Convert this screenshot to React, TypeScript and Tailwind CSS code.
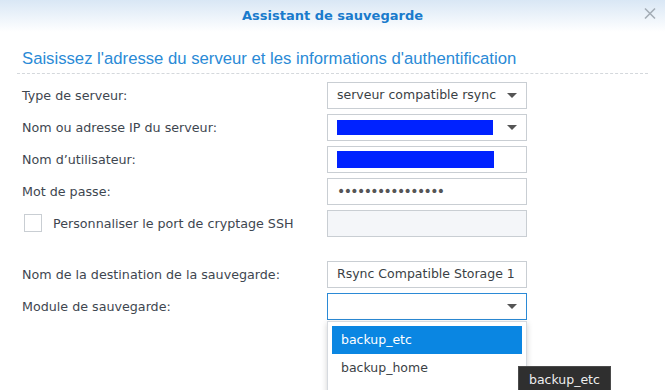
import React from 'react';

const font = "font-['DejaVu_Sans',Verdana,sans-serif]";

function Arrow() {
    return (
        <svg width="10" height="5" viewBox="0 0 10 5" className="shrink-0">
            <path d="M0 0 L10 0 L5 5 Z" fill="#555" />
        </svg>
    );
}

function Row({ label, children }: { label: React.ReactNode; children: React.ReactNode }) {
    return (
        <div className="flex items-center h-[27px]">
            <div className="w-[305px] shrink-0 text-[#3e4650] text-[12.7px]">{label}</div>
            {children}
        </div>
    );
}

function Field({ children, select, disabled, active }: { children?: React.ReactNode; select?: boolean; disabled?: boolean; active?: boolean }) {
    return (
        <div
            className={`w-[200px] h-[27px] flex items-center pl-[9px] pr-[9px] border text-[12.5px] text-[#3a3f45] ${active ? 'border-[#2b8ad6]' : 'border-[#c9ced3]'
                } ${disabled ? 'bg-[#f4f6f9]' : 'bg-white'}`}
        >
            <div className="flex-1 min-w-0 flex items-center whitespace-nowrap overflow-hidden">{children}</div>
            {select && <Arrow />}
        </div>
    );
}

export default function App() {
    return (
        <div className={`relative w-[665px] h-[390px] overflow-hidden bg-white ${font}`}>
            {/* en-tête */}
            <div className="relative h-[32px] flex items-center justify-center bg-gradient-to-b from-[#d9e7f5] to-white">
                <span className="text-[13px] font-bold text-[#1a7bcc]">Assistant de sauvegarde</span>
                <svg className="absolute right-[8px] top-[7px]" width="14" height="13" viewBox="0 0 14 13">
                    <path d="M2 1.5 L12 11.5 M12 1.5 L2 11.5" stroke="#a4adb6" strokeWidth="1.6" />
                </svg>
            </div>

            {/* sous-titre */}
            <div className="ml-[17px] mr-[17px] mt-[17px] pl-[5px] pb-[4px] border-b border-dashed border-[#d4d8dc]">
                <div className="text-[16.7px] leading-[20px] text-[#2a8ad6] font-['Liberation_Sans',Arial,sans-serif]">
                    Saisissez l'adresse du serveur et les informations d'authentification
                </div>
            </div>

            {/* formulaire */}
            <div className="pl-[22px] mt-[8px] flex flex-col gap-[5px]">
                <Row label="Type de serveur:">
                    <Field select>serveur compatible rsync</Field>
                </Row>
                <Row label="Nom ou adresse IP du serveur:">
                    <Field select>
                        <div className="w-[156px] h-[15px] bg-[#0022ff]" />
                    </Field>
                </Row>
                <Row label="Nom d’utilisateur:">
                    <Field>
                        <div className="-ml-[2px] w-[159px] h-[17px] bg-[#0022ff]" />
                    </Field>
                </Row>
                <Row label="Mot de passe:">
                    <Field>
                        <span className="text-[14px] tracking-[-1.6px] text-[#555]">••••••••••••••••</span>
                    </Field>
                </Row>
                <Row
                    label={
                        <div className="flex items-center">
                            <div className="ml-[2px] w-[18px] h-[18px] border border-[#c9ced3] bg-white" />
                            <span className="ml-[11px]">Personnaliser le port de cryptage SSH</span>
                        </div>
                    }
                >
                    <Field disabled />
                </Row>

                <div className="h-[14px]" />

                <Row label="Nom de la destination de la sauvegarde:">
                    <Field>Rsync Compatible Storage 1</Field>
                </Row>
                <Row label="Module de sauvegarde:">
                    <div className="relative">
                        <Field select active />
                        {/* liste déroulante */}
                        <div className="absolute left-0 top-[28px] w-[200px] h-[80px] bg-white border border-[#d6dadf] shadow-[0_2px_6px_rgba(0,0,0,0.18)] p-[4px] text-[12.5px]">
                            <div className="h-[28px] flex items-center pl-[9px] bg-[#0a86e2] text-white">backup_etc</div>
                            <div className="h-[28px] flex items-center pl-[9px] text-[#3a3f45]">backup_home</div>
                        </div>
                    </div>
                </Row>
            </div>

            {/* infobulle */}
            <div className="absolute left-[518px] top-[366px] h-[28px] px-[10px] flex items-center bg-[#2f2f2f] border border-[#4a4a4a] text-[12.5px] text-[#eeeeee]">
                backup_etc
            </div>
        </div>
    );
}
